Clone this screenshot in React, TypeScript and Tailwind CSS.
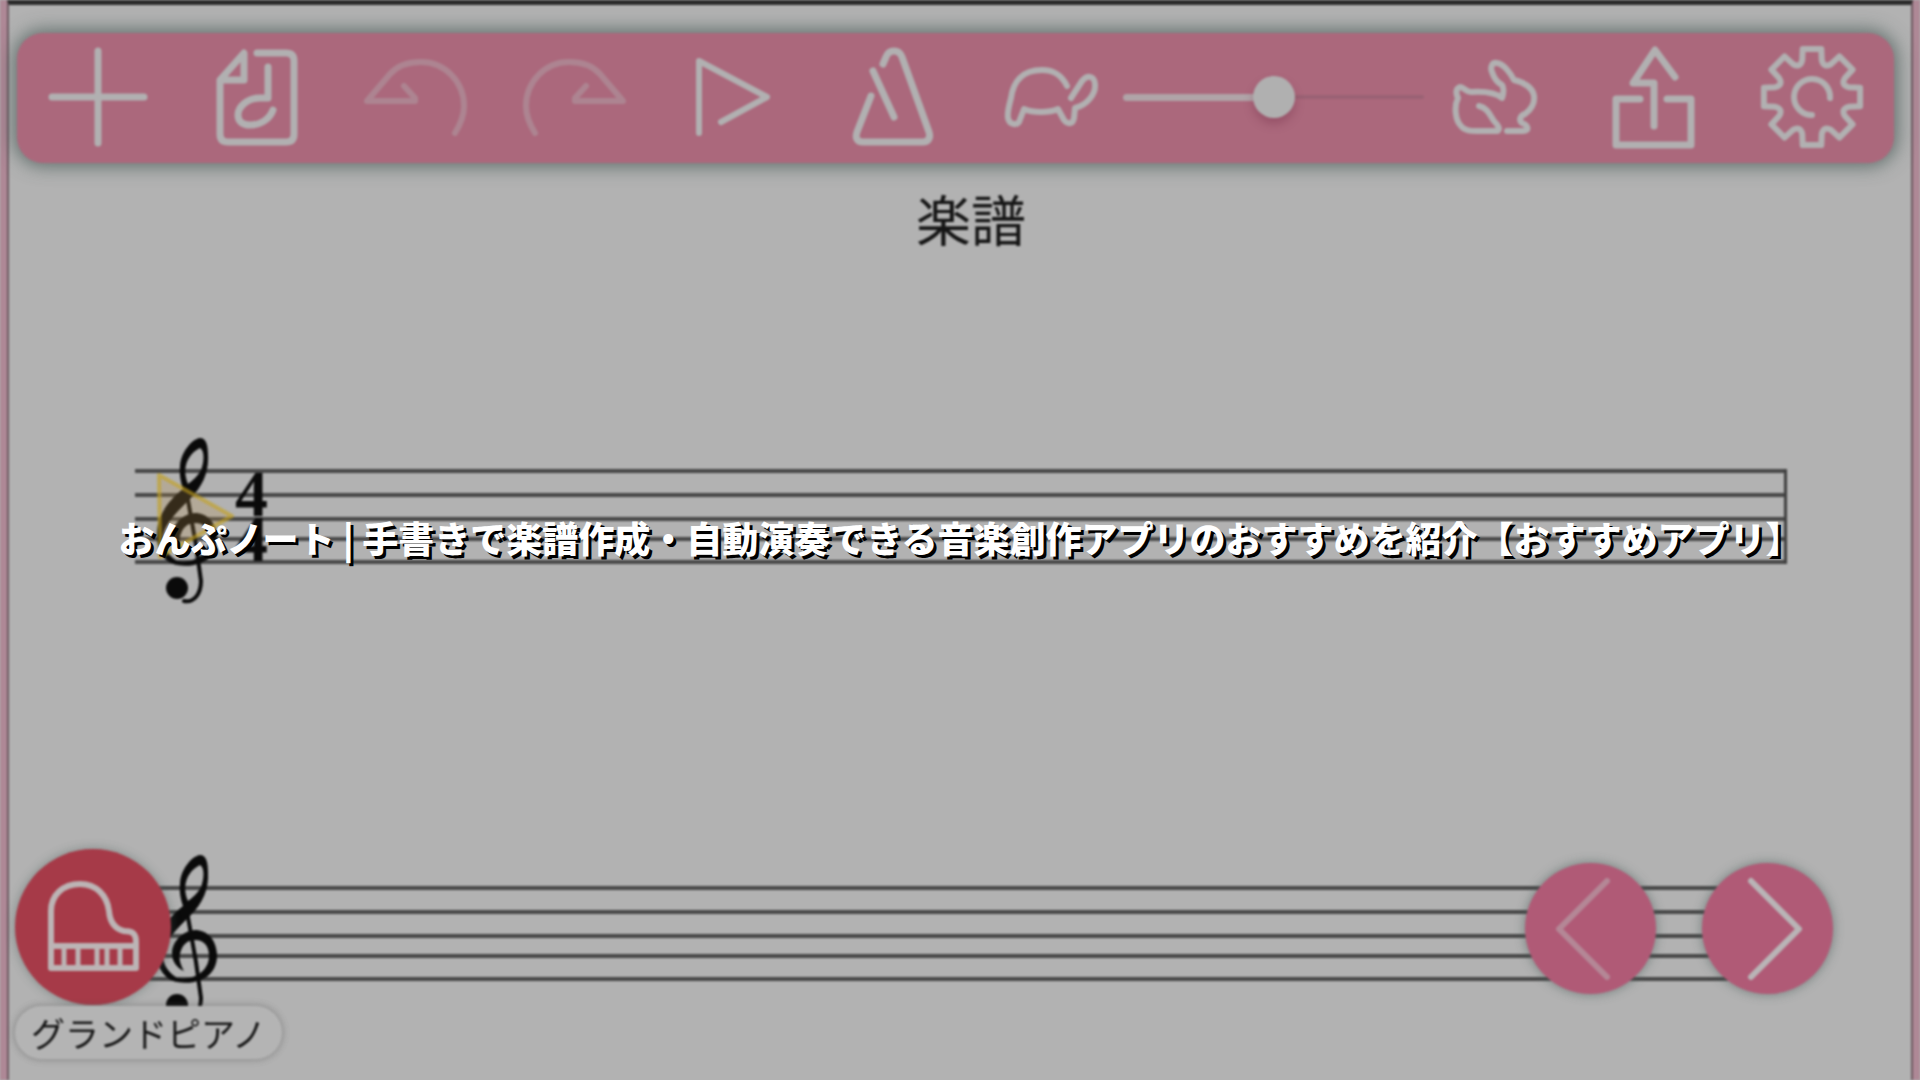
import { useState } from "react";
import type { ReactNode } from "react";

const HEADLINE =
  "おんぷノート | 手書きで楽譜作成・自動演奏できる音楽創作アプリのおすすめを紹介【おすすめアプリ】";

/* ── Gear outline: eight teeth around the centre of a 100 unit box ── */
function gearPath() {
  const at = (r: number, deg: number) => {
    const a = (deg * Math.PI) / 180;
    return `${(49 + r * Math.sin(a)).toFixed(1)} ${(50 - r * Math.cos(a)).toFixed(1)}`;
  };
  let d = "";
  for (let i = 0; i < 8; i++) {
    const t = i * 45;
    d += `${i === 0 ? "M" : "L"}${at(38, t - 15)}L${at(49, t - 11)}L${at(49, t + 11)}`;
    d += `L${at(38, t + 15)}Q${at(31, t + 22.5)} ${at(38, t + 30)}`;
  }
  return d + "Z";
}

function Icon({ children, width = 6 }: { children: ReactNode; width?: number }) {
  return (
    <svg
      viewBox="0 0 100 100"
      className="block size-[100px] overflow-visible"
      fill="none"
      stroke="currentColor"
      strokeWidth={width}
      strokeLinecap="round"
      strokeLinejoin="round"
      aria-hidden="true"
    >
      {children}
    </svg>
  );
}

function ToolButton({ label, disabled, children }: { label: string; disabled?: boolean; children: ReactNode }) {
  return (
    <button type="button" aria-label={label} disabled={disabled} className="shrink-0 disabled:opacity-40">
      {children}
    </button>
  );
}

function TempoSlider() {
  const [tempo, setTempo] = useState(50);
  return (
    <div className="grid flex-1 items-center">
      <div className="col-start-1 row-start-1 flex items-center">
        <div className="h-[7px] rounded-full bg-[#b0a4a8]" style={{ width: `${tempo}%` }} />
        <div className="h-[4px] flex-1 rounded-full bg-[#9a6274]" />
      </div>
      <input
        type="range"
        aria-label="テンポ"
        min={0}
        max={100}
        value={tempo}
        onChange={(e) => setTempo(Number(e.target.value))}
        className="col-start-1 row-start-1 h-[42px] w-full cursor-pointer appearance-none bg-transparent [&::-webkit-slider-thumb]:size-[42px] [&::-webkit-slider-thumb]:appearance-none [&::-webkit-slider-thumb]:rounded-full [&::-webkit-slider-thumb]:bg-[#b0b0b0] [&::-webkit-slider-thumb]:shadow-[0_6px_10px_rgba(120,50,75,0.4)]"
      />
    </div>
  );
}

function Toolbar() {
  return (
    <div
      role="toolbar"
      className="mt-7 mr-[17px] ml-2 flex items-center gap-[59px] rounded-[26px] bg-[#ab687c] px-[31px] pt-[14px] pb-4 text-[#b1b0b1] shadow-[0_0_18px_3px_rgba(60,80,75,0.7)]"
    >
      <ToolButton label="追加">
        <Icon width={7}>
          <path d="M50 4V96M4 50H96" />
        </Icon>
      </ToolButton>
      <ToolButton label="楽譜">
        <Icon width={7}>
          <path d="M50 6H79Q87 6 87 14V87Q87 95 79 95H21Q13 95 13 87V33L37 6V33H15" />
          <path d="M61 20V51H53C40 51 31 60 31 68C31 75 36 78 43 78C55 78 63 71 66 63" />
        </Icon>
      </ToolButton>
      <ToolButton label="元に戻す" disabled>
        <Icon>
          <path d="M38 39L49 51V54H1L24 27C32 18 43 15 55 15C79 15 98 35 98 59C98 69 94 78 89 86" />
        </Icon>
      </ToolButton>
      <ToolButton label="やり直す" disabled>
        <Icon>
          <path d="M61 39L50 51V54H98L75 27C67 18 56 15 44 15C20 15 1 35 1 59C1 69 5 78 10 86" />
        </Icon>
      </ToolButton>
      <ToolButton label="再生">
        <Icon>
          <path d="M15 86V14L83 50L37 75" />
        </Icon>
      </ToolButton>
      <ToolButton label="メトロノーム">
        <Icon width={7}>
          <path d="M40 17L43 10C46 2 56 2 59 10L86 85C88 91 85 95 80 95H20C14 95 12 91 14 85L28 49" />
          <path d="M30 24L51 70" />
        </Icon>
      </ToolButton>
      <div className="flex flex-1 items-center gap-[21px]">
        <Icon>
          <path d="M65 39C59 27 51 23 40 23C20 23 11 35 9 51C7 59 5 65 6 71C7 77 14 79 17 75L22 62C31 66 47 66 56 62L62 73C66 78 71 77 72 71L73 61C85 58 94 47 93 37C92 28 85 28 80 34L69 51" />
        </Icon>
        <TempoSlider />
        <Icon>
          <path d="M62 84H78C85 84 83 78 77 76C73 73 76 68 80 67C86 63 90 56 89 49C88 41 79 35 69 33C66 27 59 17 52 16C47 15 45 20 47 25C49 31 53 36 57 38C59 41 59 45 57 51C51 46 41 44 26 45C21 45 19 40 15 40C10 42 11 47 13 51C9 59 10 73 16 79C20 84 26 84 32 84H52C56 83 53 78 49 74C45 69 43 61 34 59" />
        </Icon>
      </div>
      <ToolButton label="共有">
        <Icon width={7}>
          <path d="M36 52H12V98H87V52H63" />
          <path d="M50 79V36H29L51 3L71 30" />
        </Icon>
      </ToolButton>
      <ToolButton label="設定">
        <Icon>
          <path d={gearPath()} />
          <path d="M67 51A18 18 0 1 0 49 68" />
        </Icon>
      </ToolButton>
    </div>
  );
}

function Clef({ cursor }: { cursor?: boolean }) {
  return (
    <svg
      viewBox="0 0 90 170"
      className="absolute -top-[34px] left-[14px] h-[170px] w-[90px] overflow-visible"
      fill="none"
      stroke="#0a0a0a"
      strokeLinecap="round"
      aria-hidden="true"
    >
      {/* upper loop and the thick diagonal */}
      <path
        d="M51 3C43 4 32 17 31 31C30 40 32 48 34 54C21 64 7 80 8 102C8 117 16 127 27 130L31 128C20 121 14 114 14 103C15 89 28 77 41 64C54 51 60 37 59 20C59 10 57 3 51 3ZM51 13C56 16 55 27 52 35C49 41 43 46 39 49C33 35 37 20 51 13Z"
        fill="#0a0a0a"
        stroke="none"
        fillRule="evenodd"
      />
      {/* bowl */}
      <path
        d="M28 130C52 134 69 122 68 102C67 87 58 78 46 78C33 79 23 90 23 101C23 110 28 116 35 119C31 112 30 107 31 102C33 93 38 88 46 88C55 88 60 94 60 104C60 117 48 129 28 126Z"
        fill="#0a0a0a"
        stroke="none"
      />
      <path d="M37 54L47 110L52 146C52 160 44 168 35 166" strokeWidth="4" />
      <circle cx="28" cy="153" r="11" fill="#0a0a0a" stroke="none" />
      {cursor && (
        <path
          d="M10 40L83 81L11 122Z"
          fill="#b98f4a"
          fillOpacity="0.25"
          stroke="#c4a21c"
          strokeOpacity="0.6"
          strokeWidth="4"
          strokeLinejoin="round"
        />
      )}
    </svg>
  );
}

/* ── Five lines with a clef; the first one carries the meter and a bar line ── */
function Staff({ first }: { first?: boolean }) {
  return (
    <div className={`relative mr-[124px] ml-[126px] border-[#404040] ${first ? "border-r-[3px]" : ""}`}>
      <div className="h-6 border-t-4 border-[#484848]" />
      <div className="h-6 border-t-4 border-[#484848]" />
      <div className="h-5 border-t-4 border-[#484848]" />
      <div className="h-[23px] border-t-4 border-[#484848]" />
      <div className="border-t-4 border-[#484848]" />
      <Clef cursor={first} />
      {first && (
        <div className="absolute top-[2px] left-[100px] flex flex-col font-['Liberation_Serif',serif] text-[66px] leading-[45px] font-bold text-[#0a0a0a]">
          <span>4</span>
          <span>4</span>
        </div>
      )}
    </div>
  );
}

function PageButton({ label, d, disabled }: { label: string; d: string; disabled?: boolean }) {
  return (
    <button
      type="button"
      aria-label={label}
      disabled={disabled}
      className="group flex size-[131px] items-center justify-center rounded-full bg-[#b05a76] text-[#b9b4b6] shadow-[0_0_10px_1px_rgba(70,90,85,0.5)]"
    >
      <span className="group-disabled:opacity-50">
        <Icon>
          <path d={d} />
        </Icon>
      </span>
    </button>
  );
}

export default function App() {
  return (
    <div className="relative min-h-screen overflow-hidden bg-[#b2b2b2] font-['Noto_Sans_CJK_JP',sans-serif]">
      <div className="min-h-screen border-x-[7px] border-[#ae8896] blur-[1px]">
        <div className="min-h-screen border-x-2 border-t-[5px] border-x-[#6e5a62] border-t-[#2b2b2b]">
          <Toolbar />
          <h2 className="mt-6 pl-[22px] text-center text-[55px] leading-[60px] text-[#151515]">楽譜</h2>
          <div className="mt-[222px] flex flex-col gap-[322px]">
            <Staff first />
            <Staff />
          </div>
        </div>

        {/* Floating controls over the score */}
        <div className="absolute bottom-[21px] left-2 flex flex-col items-start gap-px">
          <button
            type="button"
            aria-labelledby="instrument"
            className="flex size-[156px] items-center justify-center rounded-full bg-[#a63a48] text-[#bcb4b5] shadow-[0_0_10px_1px_rgba(70,90,85,0.4)]"
          >
            <Icon>
              <path d="M8 91V34C8 18 20 7 37 7C53 7 64 18 66 34C67 47 73 52 81 54C90 54 93 57 93 65V91ZM8 69H93" />
              <path d="M21 70V88M35 70V88M54 70V88M64 70V88M77 70V88" strokeWidth="5" strokeLinecap="butt" />
            </Icon>
          </button>
          <span
            id="instrument"
            className="rounded-full bg-[#b4b4b4] px-4 text-[34px] leading-[53px] text-[#151515] shadow-[0_0_6px_1px_rgba(80,80,80,0.4)]"
          >
            グランドピアノ
          </span>
        </div>
        <div className="absolute right-20 bottom-[86px] flex gap-[46px]">
          <PageButton label="前のページ" d="M66 2L18 50L66 98" disabled />
          <PageButton label="次のページ" d="M33 2L81 50L33 98" />
        </div>
      </div>

      <div className="absolute inset-0 flex items-center justify-center pb-[7px]">
        <h1 className="text-center text-[36px] leading-[54px] font-black whitespace-nowrap text-white [text-shadow:3px_3px_0_#000]">
          {HEADLINE}
        </h1>
      </div>
    </div>
  );
}
